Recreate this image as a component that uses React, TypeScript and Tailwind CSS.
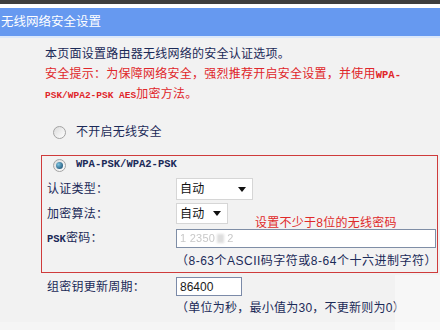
const sans = 'font-["Liberation_Sans","Noto_Sans_CJK_SC",sans-serif]';
const mono = 'font-["Liberation_Mono","Noto_Sans_CJK_SC",monospace]';

function Radio({ checked = false }: { checked?: boolean }) {
  return (
    <span className="flex h-[13px] w-[13px] shrink-0 items-center justify-center rounded-full border border-[#a3a3a3] bg-linear-to-br from-[#dcdcdc] to-white">
      {checked && (
        <span className="h-[7px] w-[7px] rounded-full bg-[radial-gradient(circle_at_35%_35%,#7cc3e0,#0f3f63)]" />
      )}
    </span>
  );
}

function Caret() {
  return (
    <svg width="8" height="5" viewBox="0 0 8 5">
      <polygon points="0,0 8,0 4,5" fill="#111" />
    </svg>
  );
}

function Select({ width }: { width: string }) {
  return (
    <div
      className={`flex h-full items-center justify-between border border-[#d6d6d6] bg-white pl-[3px] pr-[6px] text-[12px] text-[#111] ${width}`}
    >
      <span>自动</span>
      <Caret />
    </div>
  );
}

export default function App() {
  return (
    <div className={`relative h-[330px] w-[440px] overflow-hidden bg-[#f2f2f2] ${sans}`}>
      <div className="h-[4px] bg-[#3e3e3e]" />
      <div className="h-[4px] bg-white" />
      <div className="flex h-[28px] items-center bg-[#6699f0] pl-[1px] text-[12.5px] text-white">
        无线网络安全设置
      </div>
      <div className="h-[2px] bg-[#dbe8fb]" />

      <div className="pl-[45px] pt-[7px] text-[12px] tracking-[0.25px]">
        <p className="leading-[19.5px] text-[#1b2a58]">本页面设置路由器无线网络的安全认证选项。</p>
        <p className="leading-[19.5px] text-[#e0262a]">
          安全提示：为保障网络安全，强烈推荐开启安全设置，并使用
          <span className={`${mono} text-[10.5px] font-semibold tracking-normal`}>WPA-</span>
        </p>
        <p className="leading-[19.5px] text-[#e0262a]">
          <span className={`${mono} text-[9.5px] font-semibold tracking-normal`}>PSK/WPA2-PSK AES</span>加密方法。
        </p>

        <div className="mt-[17px] flex h-[19px] items-center gap-[10px] pl-[8px] text-[#1b2a58]">
          <Radio />
          <span>不开启无线安全</span>
        </div>

        <div className="-ml-[4px] mt-[13.5px] w-[397px] border border-[#cf3b3b] pl-[5px]">
          <div className="flex h-[18px] items-center gap-[10px] pl-[6px] text-[#1b2a58]">
            <Radio checked />
            <span className={`${mono} text-[10.5px] font-semibold tracking-normal`}>WPA-PSK/WPA2-PSK</span>
          </div>
          <div className="mt-[4px] flex h-[22px] items-center">
            <span className="w-[129px] text-[#1b2a58]">认证类型：</span>
            <Select width="w-[77px]" />
          </div>
          <div className="mt-[3px] flex h-[21px] items-center">
            <span className="w-[129px] text-[#1b2a58]">加密算法：</span>
            <Select width="w-[52px]" />
            <span className="-mb-[6px] ml-[27px] self-end leading-[14px] text-[#e02a2a]">设置不少于8位的无线密码</span>
          </div>
          <div className="mt-[5px] flex h-[19px] items-center">
            <span className="w-[129px] text-[#1b2a58]">
              <span className={`${mono} text-[10.5px] font-semibold tracking-normal`}>PSK</span>密码：
            </span>
            <div className="flex h-full w-[260px] items-center border border-[#7f8ea6] bg-white pl-[3px] text-[11px] text-[#c8c8c8]">
              <span className="blur-[0.6px]">1 2350</span>
              <span className="ml-[2px] h-[9px] w-[7px] bg-[#dedede] blur-[0.8px]" />
              <span className="ml-[3px] blur-[0.6px]">2</span>
            </div>
          </div>
          <div className="mt-[2px] flex h-[22px] items-center pl-[129px] tracking-[0.5px] text-[#1b2a58]">
            （8-63个ASCII码字符或8-64个十六进制字符）
          </div>
        </div>

        <div className="mt-[4px] flex h-[19px] items-center pl-[2px]">
          <span className="w-[129px] text-[#1b2a58]">组密钥更新周期：</span>
          <div className="flex h-full w-[66px] items-center border border-[#7b8aa8] bg-white pl-[3px] text-[12px] tracking-normal text-[#1a1a1a]">
            86400
          </div>
        </div>
        <div className="mt-[2px] flex h-[20px] items-center pl-[131px] text-[#1b2a58]">
          （单位为秒，最小值为30，不更新则为0）
        </div>
      </div>

      <div className="absolute bottom-0 right-0 h-[55px] w-[45px] bg-white/40" />
      <div className="absolute bottom-0 left-0 h-[8px] w-full bg-white/25" />
    </div>
  );
}
